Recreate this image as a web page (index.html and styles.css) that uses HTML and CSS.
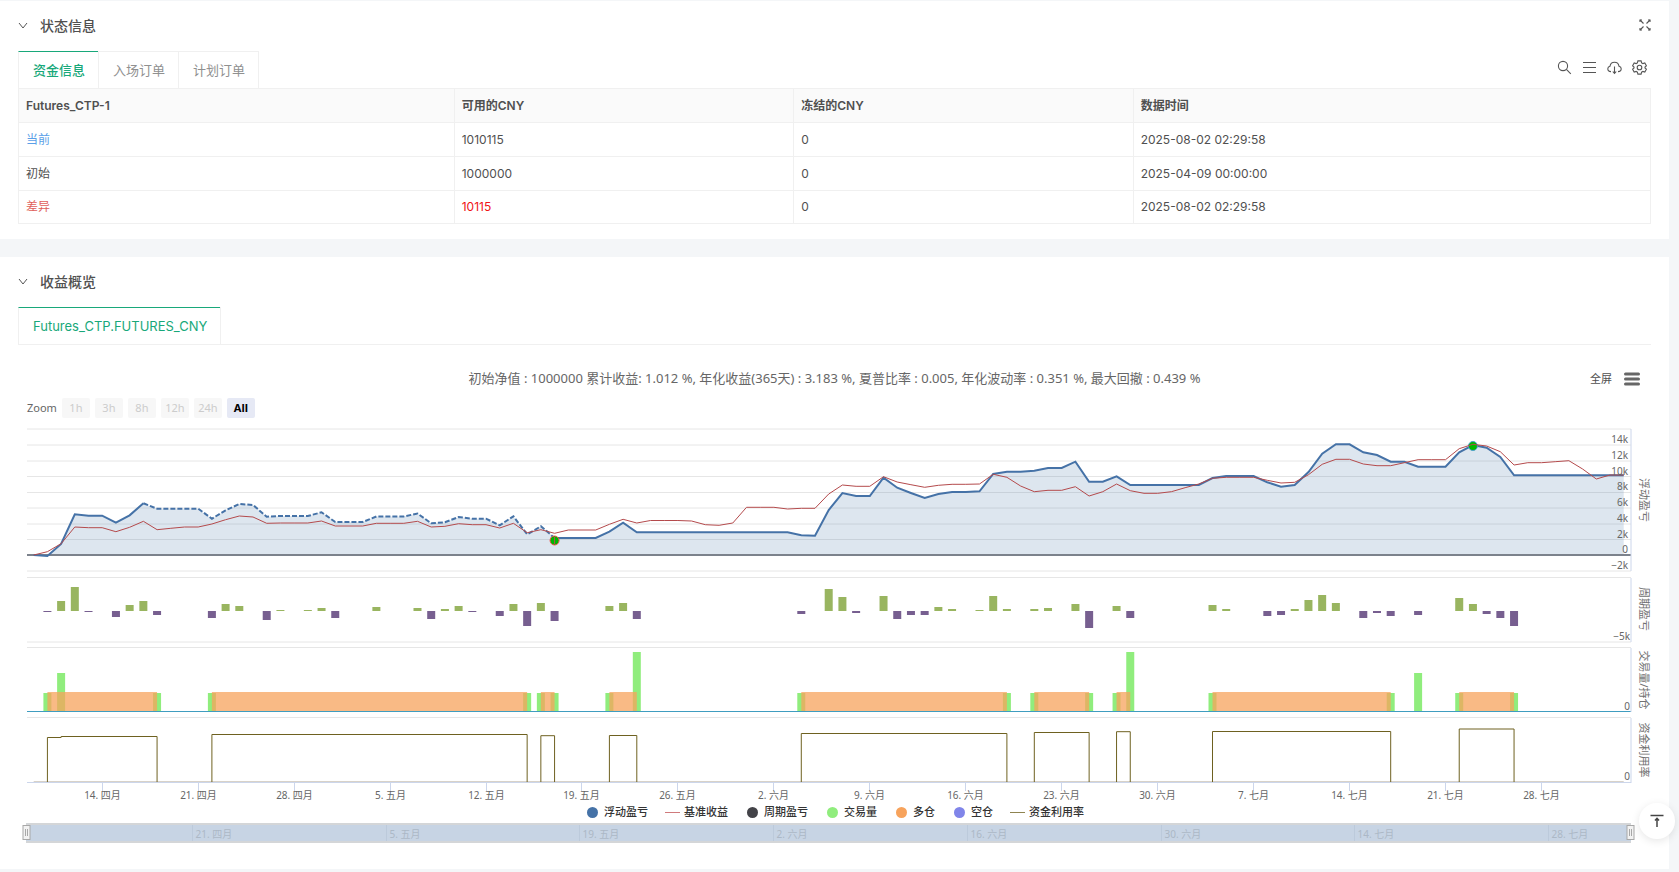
FILE: index.html
```
<!DOCTYPE html>
<html lang="zh-CN">
<head>
    <meta charset="UTF-8">
    <meta name="viewport" content="width=device-width, initial-scale=1.0">
    <title>回测结果</title>
    <link rel="stylesheet" href="styles.css">
</head>
<body>
    <main class="page">
        <section class="panel">
            <header class="panel-header">
                <svg class="chevron" viewBox="0 0 10 10"><path d="M1 2l4 5 4-5"/></svg>
                <h2>状态信息</h2>
                <button class="icon-button collapse" aria-label="收起">
                    <svg width="12" height="12" viewBox="0 0 12 12"><path d="M1 1l3.500 3.500M11 1L7.500 4.500M1 11l3.500-3.500M11 11L7.500 7.500"/><path d="M1 3V1h2M9 1h2v2M1 9v2h2M9 11h2V9"/></svg>
                </button>
            </header>

            <div class="tab-bar">
                <div class="tabs">
                    <button class="tab active">资金信息</button>
                    <button class="tab">入场订单</button>
                    <button class="tab">计划订单</button>
                </div>
                <div class="tools">
                    <button class="icon-button" aria-label="搜索">
                        <svg width="15" height="15" viewBox="0 0 15 15"><circle cx="6" cy="6" r="4.6"/><path d="M9.4 9.4l4.4 4.4"/></svg>
                    </button>
                    <button class="icon-button" aria-label="列表">
                        <svg width="15" height="15" viewBox="0 0 15 15"><path d="M1 2.5h13M1 7.5h13M1 12.5h13"/></svg>
                    </button>
                    <button class="icon-button" aria-label="下载">
                        <svg width="15" height="15" viewBox="0 0 15 15"><path d="M4 11.6C2 11.6.8 10.4.8 8.8c0-1.300.9-2.300 2.200-2.600C3.400 3.800 5.200 2.300 7.500 2.300s4.100 1.500 4.500 3.900c1.300.3 2.200 1.300 2.200 2.600 0 1.600-1.200 2.800-3.200 2.800M7.500 6.500v6.700M5.800 11.500l1.700 1.900 1.700-1.900"/></svg>
                    </button>
                    <button class="icon-button" aria-label="设置">
                        <svg width="15" height="15" viewBox="0 0 15 15"><path d="M5.900.9h3.200l.5 1.900 1.300.8 1.900-.6 1.600 2.800L13 7.100v.8l1.400 1.300-1.600 2.800-1.900-.6-1.300.8-.5 1.900H5.900l-.5-1.900-1.300-.8-1.900.6L.6 9.200 2 7.900v-.8L.6 5.800 2.200 3l1.900.6 1.300-.8z"/><circle cx="7.500" cy="7.500" r="2.300"/></svg>
                    </button>
                </div>
            </div>

            <table class="funds">
                <thead>
                    <tr>
                        <th>Futures_CTP-1</th>
                        <th>可用的CNY</th>
                        <th>冻结的CNY</th>
                        <th>数据时间</th>
                    </tr>
                </thead>
                <tbody>
                    <tr>
                        <td class="current">当前</td>
                        <td>1010115</td>
                        <td>0</td>
                        <td>2025-08-02 02:29:58</td>
                    </tr>
                    <tr>
                        <td>初始</td>
                        <td>1000000</td>
                        <td>0</td>
                        <td>2025-04-09 00:00:00</td>
                    </tr>
                    <tr>
                        <td class="diff">差异</td>
                        <td class="profit">10115</td>
                        <td>0</td>
                        <td>2025-08-02 02:29:58</td>
                    </tr>
                </tbody>
            </table>
        </section>

        <section class="panel">
            <header class="panel-header">
                <svg class="chevron" viewBox="0 0 10 10"><path d="M1 2l4 5 4-5"/></svg>
                <h2>收益概览</h2>
            </header>

            <div class="tab-bar lined">
                <div class="tabs">
                    <button class="tab active">Futures_CTP.FUTURES_CNY</button>
                </div>
            </div>

            <div class="chart">
                <div class="chart-head">
                    <p class="chart-title">初始净值 : 1000000 累计收益: 1.012 %, 年化收益(365天) : 3.183 %, 夏普比率 : 0.005, 年化波动率 : 0.351 %, 最大回撤 : 0.439 %</p>
                    <div class="chart-menu">
                        <button class="fullscreen">全屏</button>
                        <button class="icon-button menu" aria-label="菜单">
                            <svg width="16" height="14" viewBox="0 0 16 14"><path d="M1.500 2h13M1.500 7h13M1.500 12h13"/></svg>
                        </button>
                    </div>
                </div>

                <div class="ranges">
                    <span class="ranges-label">Zoom</span>
                    <button disabled>1h</button>
                    <button disabled>3h</button>
                    <button disabled>8h</button>
                    <button disabled>12h</button>
                    <button disabled>24h</button>
                    <button class="selected">All</button>
                </div>

                <svg id="plot" class="plot" viewBox="18 425 1633 379"></svg>

                <div class="legend">
                    <button><i class="dot floating"></i>浮动盈亏</button>
                    <button><i class="dash benchmark"></i>基准收益</button>
                    <button><i class="dot period"></i>周期盈亏</button>
                    <button><i class="dot volume"></i>交易量</button>
                    <button><i class="dot long"></i>多仓</button>
                    <button><i class="dot short"></i>空仓</button>
                    <button><i class="dash usage"></i>资金利用率</button>
                </div>

                <svg id="navigator" class="navigator" viewBox="18 822 1633 22"></svg>
            </div>
        </section>
    </main>

    <button class="back-top" aria-label="返回顶部">
        <svg width="14" height="14" viewBox="0 0 14 14"><path d="M0.500 1.500h13M7 13V4.500M5 6.500l2-2.200 2 2.200"/></svg>
    </button>

    <script src="chart.js"></script>
</body>
</html>
```
FILE: styles.css
```
* {
    margin: 0;
    padding: 0;
    box-sizing: border-box;
}

body {
    font-family: Inter, 'Noto Sans CJK SC', sans-serif;
    font-size: 12px;
    color: #505050;
    background: #f4f6f8;
}

button {
    font: inherit;
    color: inherit;
    background: none;
    border: none;
    cursor: pointer;
}

.page {
    padding: 1px 10px 3px 0;
    display: flex;
    flex-direction: column;
    gap: 18px;
}

.panel {
    background: white;
    padding: 0 18px 15px;
}

.panel-header {
    height: 50px;
    display: flex;
    align-items: center;
}

.panel-header h2 {
    font-size: 14px;
    font-weight: 500;
    line-height: 20px;
    color: #505050;
}

.chevron {
    width: 10px;
    height: 10px;
    margin-right: 12px;
    fill: none;
    stroke: #555;
}

.icon-button {
    display: flex;
}

.icon-button svg {
    fill: none;
    stroke: #555;
    stroke-width: 1.1;
}

.collapse {
    margin-left: auto;
    padding-bottom: 3px;
}

/* tabs */
.tab-bar {
    display: flex;
    justify-content: space-between;
    align-items: center;
}

.tabs {
    display: flex;
    border-right: 1px solid #f0f0f0;
}

.tab {
    height: 37px;
    padding: 0 13px 1px 14px;
    font-size: 13px;
    line-height: 20px;
    color: #909090;
    border-top: 1px solid #f0f0f0;
    border-left: 1px solid #f0f0f0;
}

.tab.active {
    color: #18a87a;
    font-weight: 500;
    border-top-color: #18a87a;
}

.tab-bar.lined {
    border-bottom: 1px solid #f0f0f0;
}

.lined .tab.active {
    font-weight: 400;
}

.tools {
    display: flex;
    gap: 10px;
    padding: 0 4px 5px 0;
}

/* funds table */
.funds {
    width: 100%;
    table-layout: fixed;
    border-collapse: collapse;
}

.funds th,
.funds td {
    height: 34px;
    padding: 0 7px;
    text-align: left;
    line-height: 18px;
    border: 1px solid #f0f0f0;
}

.funds th {
    background: #fafafa;
    font-weight: 600;
}

.funds tr:last-child td {
    height: 33px;
}

.funds th:nth-child(1) {
    width: 26.7%;
}

.funds th:nth-child(2),
.funds th:nth-child(3) {
    width: 20.8%;
}

.funds .current {
    color: #5a9fe8;
}

.funds .diff {
    color: #e0605a;
}

.funds .profit {
    color: #f01414;
}

/* chart */
.chart {
    font-family: 'Noto Sans', 'Noto Sans CJK SC', sans-serif;
}

.chart-head {
    position: relative;
    height: 53px;
    padding-top: 23px;
}

.chart-title {
    font-size: 13px;
    line-height: 20px;
    text-align: center;
    color: #666;
}

.chart-menu {
    position: absolute;
    top: 26px;
    right: 11px;
    display: flex;
    align-items: center;
    gap: 12px;
}

.fullscreen {
    font-size: 11px;
    line-height: 16px;
}

.menu svg {
    stroke: #666;
    stroke-width: 3;
    stroke-linecap: round;
}

.ranges {
    display: flex;
    gap: 5px;
    height: 27px;
    padding-left: 9px;
    line-height: 20px;
    font-size: 11px;
    color: #666;
}

.ranges button {
    width: 28px;
    height: 20px;
    border-radius: 2px;
    background: #f7f7f7;
    color: #ccc;
}

.ranges button.selected {
    background: #e6e9f5;
    color: black;
    font-weight: bold;
}

.plot,
.navigator {
    display: block;
    width: 100%;
    fill: none;
}

.grid {
    stroke: #e6e6e6;
}

.axis {
    stroke: #ccd6eb;
}

.zero {
    stroke: #7c828c;
    stroke-width: 2;
}

.area {
    fill: #4572a7;
    fill-opacity: 0.18;
}

.floating-line {
    stroke: #4572a7;
    stroke-width: 2;
}

.dashed {
    stroke-dasharray: 5 2;
}

.benchmark-line {
    stroke: #b44a4c;
}

.gain {
    fill: #99b560;
}

.loss {
    fill: #775f90;
}

.volume-bar {
    fill: #90ed7d;
}

.long-area {
    fill: #f7a35c;
    fill-opacity: 0.75;
}

.short-line {
    stroke: #3f9dc0;
}

.usage-line {
    stroke: #6e6120;
}

.usage-idle {
    stroke: #d8d2c8;
}

.label {
    font-size: 10px;
    fill: #666;
}

.end {
    text-anchor: end;
}

.middle {
    text-anchor: middle;
}

.axis-title {
    font-size: 11px;
    fill: #707070;
    text-anchor: middle;
}

.marker {
    fill: #00b800;
}

/* legend */
.legend {
    display: flex;
    justify-content: center;
    gap: 17px;
    height: 18px;
    font-size: 11px;
    font-weight: 500;
    line-height: 16px;
    color: #333;
}

.legend button {
    display: flex;
    align-items: center;
    gap: 4px;
    height: 16px;
}

.legend i {
    width: 15px;
}

.dot::before {
    content: '';
    display: block;
    width: 11px;
    height: 11px;
    margin: 0 auto;
    border-radius: 50%;
    background: currentColor;
}

.dash {
    height: 1px;
    background: currentColor;
}

.floating {
    color: #4572a7;
}

.benchmark {
    color: #d07a7c;
}

.period {
    color: #434348;
}

.volume {
    color: #90ed7d;
}

.long {
    color: #f7a35c;
}

.short {
    color: #8085e9;
}

.usage {
    color: #8f8450;
}

/* navigator */
.navigator {
    margin-bottom: 10px;
}

.track {
    fill: #c7d4e4;
}

.track-edge {
    stroke: #d4d6d8;
    stroke-width: 2;
}

.track-grid {
    stroke: #bccadb;
}

.track-label {
    font-size: 10px;
    fill: #acb8c6;
}

.handle {
    fill: #f2f2f2;
    stroke: #a8a8a8;
}

.back-top {
    position: fixed;
    right: 4px;
    bottom: 33px;
    width: 36px;
    height: 36px;
    display: flex;
    align-items: center;
    justify-content: center;
    border-radius: 50%;
    background: white;
    box-shadow: 0 2px 8px rgba(0, 0, 0, 0.1);
}

.back-top svg {
    fill: none;
    stroke: #444;
    stroke-width: 1.5;
}
```
FILE: chart.js
```
const LEFT = 27;
const RIGHT = 1631;
const DAY = 13.707;

// one point per day, starting on 9 April
const floating = [
    555, 556, 544, 514.3, 515.7, 515.7, 522.7, 515.3, 503.3, 508.7,
    508.7, 508.7, 508.7, 518.7, 510.3, 504, 505, 516.7, 516, 516,
    516, 512.3, 522, 522, 522, 516.5, 516.5, 516.5, 513.5, 523.3,
    522.3, 517, 518.7, 518.7, 525.3, 516.3, 534.3, 526.3, 538, 538,
    538, 538, 531.7, 522.7, 532.3, 532.3, 532.3, 532.3, 532.3, 532.3,
    532.3, 532.3, 532.3, 532.3, 532.3, 532.3, 535.2, 535.7, 510, 493,
    496, 496, 477.7, 487.7, 493, 498, 494, 492, 492, 491.3,
    474, 471.7, 471.7, 470.7, 468, 468, 461.7, 481.7, 481.7, 476.3,
    485, 485, 485, 485, 485, 485, 478, 476, 476, 476,
    482.3, 486.7, 485, 472, 453.7, 444.3, 444.3, 452.3, 455, 461.7,
    461.7, 466.7, 466.7, 466.7, 452.3, 445, 447.7, 457, 475.3, 475.3,
    475.3, 475.3, 475.3, 475.3, 475.3, 475.3, 475.3
];

const benchmark = [
    555, 551.7, 543.7, 527, 527.7, 527.7, 531.7, 527.3, 521.3, 529.7,
    528.3, 527, 527, 524, 519.7, 516, 517, 523.3, 523, 523,
    523, 521, 526, 526, 526, 523.3, 523.3, 523.3, 521.3, 527,
    526.3, 523.7, 524.7, 524.7, 528, 523.3, 532.7, 529.7, 533.3, 530,
    530, 530, 524.3, 519.3, 523, 520.5, 520.5, 520.5, 521, 524.7,
    525.3, 523, 507.3, 507.3, 507.3, 509, 508.3, 508.3, 494, 485,
    486.3, 486.3, 476.7, 482, 484.7, 487.3, 485.3, 484.3, 484.3, 484,
    474.3, 477.3, 486, 491.7, 490.3, 490.3, 486.7, 496, 491.7, 484,
    490.7, 493.3, 493.3, 491.7, 487.7, 484, 478.3, 477.3, 477.3, 477.3,
    480.3, 483, 482.3, 474.7, 464.3, 459.3, 459.3, 464, 465.7, 465.7,
    462.7, 459.7, 459.7, 459.7, 448.7, 444.3, 446, 451.7, 465, 462.7,
    462.7, 461.7, 460.7, 469, 479, 475, 475
];

// [day, size]
const period = [
    [1, -1], [2, 10], [3, 24], [4, -1], [6, -6], [7, 6], [8, 10], [9, -4],
    [13, -7], [14, 7], [15, 5], [17, -9], [18, 1], [20, 1], [21, 3], [22, -7],
    [25, 4], [28, 3], [29, -8], [30, 2], [31, 5], [32, -1], [34, -5], [35, 7],
    [36, -15], [37, 8], [38, -10], [42, 5], [43, 8], [44, -8], [56, -3], [58, 22],
    [59, 14], [60, -2], [62, 15], [63, -8], [64, -4], [65, -4], [66, 4], [67, 2],
    [69, 1], [70, 15], [71, 2], [73, 2], [74, 3], [76, 7], [77, -17], [79, 5],
    [80, -7], [86, 6], [87, 2], [90, -5], [91, -4], [92, 2], [93, 11], [94, 16],
    [95, 8], [97, -7], [98, -2], [99, -5], [101, -4], [104, 13], [105, 7],
    [106, -3], [107, -7], [108, -15]
];

const volume = [
    [1, 18], [2, 38], [9, 18], [13, 18], [36, 18], [37, 18], [38, 18], [42, 18],
    [44, 59], [56, 18], [71, 18], [73, 18], [77, 18], [79, 18], [80, 59],
    [86, 18], [99, 18], [101, 38], [104, 18], [108, 18]
];

// [first day, last day, usage line height]
const positions = [
    [1, 9, 736.5], [13, 36, 734.5], [37, 38, 735.7], [42, 44, 735.5],
    [56, 71, 733.5], [73, 77, 732.5], [79, 80, 731.7], [86, 99, 731.5],
    [104, 108, 729]
];

const weeks = [
    '14. 四月', '21. 四月', '28. 四月', '5. 五月', '12. 五月', '19. 五月',
    '26. 五月', '2. 六月', '9. 六月', '16. 六月', '23. 六月', '30. 六月',
    '7. 七月', '14. 七月', '21. 七月', '28. 七月'
];

const x = day => 33.7 + day * DAY;
const line = (x1, y1, x2, y2, cls) => `<path class="${cls}" d="M${x1} ${y1}L${x2} ${y2}"/>`;
const rect = (left, top, w, h, cls) => `<rect class="${cls}" x="${left}" y="${top}" width="${w}" height="${h}"/>`;
const text = (left, top, str, cls) => `<text class="${cls}" x="${left}" y="${top}">${str}</text>`;
const points = (data, from = 0) => data.map((y, i) => `${x(i + from).toFixed(1)},${y}`).join(' ');

function drawProfit() {
    let out = '';
    [429, 445, 461, 476.5, 492.5, 508, 524, 539.5, 571].forEach(y => {
        out += line(LEFT, y, RIGHT, y, 'grid');
    });
    out += `<polygon class="area" points="${x(0)},555 ${points(floating)} ${x(116)},555"/>`;
    out += line(LEFT, 555, RIGHT, 555, 'zero');
    out += `<polyline class="floating-line" points="${points(floating.slice(0, 9))}"/>`;
    out += `<polyline class="floating-line dashed" points="${points(floating.slice(8, 39), 8)}"/>`;
    out += `<polyline class="floating-line" points="${points(floating.slice(38), 38)}"/>`;
    out += `<circle class="marker" cx="${x(38)}" cy="540.5" r="4.5" stroke="#f0524b"/>`;
    out += `<circle class="marker" cx="${x(105)}" cy="446" r="4.5" stroke="#4a9fd0"/>`;
    out += line(x(38), 537, x(38), 544, 'benchmark-line');
    out += `<polyline class="benchmark-line" points="${points(benchmark)}"/>`;
    ['14k', '12k', '10k', '8k', '6k', '4k', '2k', '0', '−2k'].forEach((str, i) => {
        out += text(1628, 443 + Math.round(i * 15.75), str, 'label end');
    });
    return out;
}

function drawPeriod() {
    let out = line(LEFT, 577.5, RIGHT, 577.5, 'grid') + line(LEFT, 642, RIGHT, 642, 'grid');
    period.forEach(([day, v]) => {
        out += rect(x(day) - 4, v > 0 ? 611 - v : 611, 8, Math.abs(v), v > 0 ? 'gain' : 'loss');
    });
    return out + text(1630, 640, '−5k', 'label end');
}

function drawVolume() {
    let out = line(LEFT, 647.5, RIGHT, 647.5, 'grid') + line(LEFT, 711.5, RIGHT, 711.5, 'short-line');
    volume.forEach(([day, v]) => {
        out += rect(x(day) - 4, 711 - v, 8, v, 'volume-bar');
    });
    positions.forEach(([from, to]) => {
        out += rect(x(from), 692, x(to) - x(from), 19, 'long-area');
    });
    return out + text(1630, 710, '0', 'label end');
}

function drawUsage() {
    let out = line(LEFT, 717.5, RIGHT, 717.5, 'grid') + line(x(0), 781.5, x(116), 781.5, 'usage-idle');
    positions.forEach(([from, to, y], i) => {
        const start = i === 0 ? `V737.5H${x(2)}V${y}` : `V${y}`;
        out += `<path class="usage-line" d="M${x(from)} 782${start}H${x(to)}V782"/>`;
    });
    out += line(LEFT, 782.5, RIGHT, 782.5, 'axis');
    weeks.forEach((str, i) => {
        const at = Math.floor(x(5 + i * 7)) + 0.5;
        out += line(at, 783, at, 791, 'axis') + text(at, 799, str, 'label middle');
    });
    return out + text(1630, 780, '0', 'label end');
}

function drawAxes() {
    let out = '';
    [[429, 571], [578, 642], [648, 712], [718, 783]].forEach(([top, bottom]) => {
        out += line(1631, top, 1631, bottom, 'axis');
    });
    [['浮动盈亏', 500], ['周期盈亏', 609], ['交易量/持仓', 680], ['资金利用率', 750]].forEach(([str, y]) => {
        out += `<text class="axis-title" transform="translate(1640 ${y}) rotate(90)">${str}</text>`;
    });
    return out;
}

function drawNavigator() {
    let out = rect(26, 823, 1605, 19, 'track');
    out += line(26, 824, 1631, 824, 'track-edge') + line(26, 842, 1631, 842, 'track-edge');
    for (let i = 1; i < weeks.length; i += 2) {
        const at = Math.round(192 + (i - 1) / 2 * 193.7) + 0.5;
        out += line(at, 825, at, 841, 'track-grid') + text(at + 3, 838, weeks[i], 'track-label');
    }
    [26.5, 1630.5].forEach(at => {
        out += rect(at - 3.5, 825.5, 7, 14, 'handle');
        out += line(at - 1, 829, at - 1, 836, 'handle') + line(at + 1, 829, at + 1, 836, 'handle');
    });
    return out;
}

document.getElementById('plot').innerHTML = drawProfit() + drawPeriod() + drawVolume() + drawUsage() + drawAxes();
document.getElementById('navigator').innerHTML = drawNavigator();
```
